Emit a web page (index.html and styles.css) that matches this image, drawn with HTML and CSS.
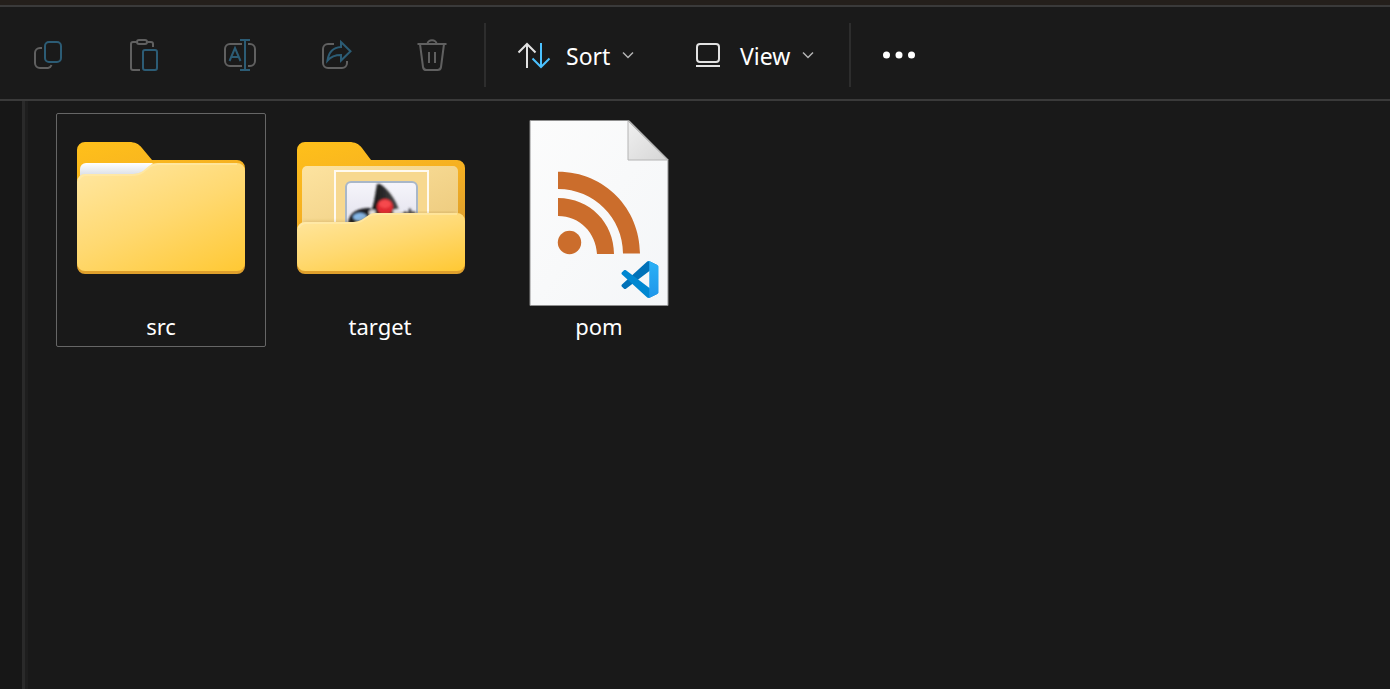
FILE: index.html
```html
<!DOCTYPE html>
<html lang="en">
<head>
<meta charset="utf-8">
<title>Files</title>
<link rel="stylesheet" href="styles.css">
</head>
<body>
<div class="window">
  <header class="toolbar">
    <button class="tool" type="button" aria-label="Copy" disabled>
      <svg class="icon" viewBox="0 0 48 48"><path class="dim" d="M18 17h-2a5 5 0 0 0-5 5v10a5 5 0 0 0 5 5h8a4.500 4.500 0 0 0 3.500-3"/><rect class="dim-blue" x="21" y="11" width="16" height="20" rx="4"/></svg>
    </button>
    <button class="tool" type="button" aria-label="Paste" disabled>
      <svg class="icon" viewBox="0 0 48 48"><path class="dim" d="M17 11h-4a2 2 0 0 0-2 2v24a2 2 0 0 0 2 2h7M27 11h4a2 2 0 0 1 2 2v3"/><rect class="dim" x="17" y="9" width="10" height="4" rx="2"/><rect class="dim-blue" x="23" y="19" width="14" height="20" rx="2"/></svg>
    </button>
    <button class="tool" type="button" aria-label="Rename" disabled>
      <svg class="icon" viewBox="0 0 48 48"><path class="dim" d="M26 13H14a5 5 0 0 0-5 5v12a5 5 0 0 0 5 5h12M32 13h2a5 5 0 0 1 5 5v12a5 5 0 0 1-5 5h-2"/><path class="dim-blue" d="M29 9v30M24 9h10M24 39h10M13.500 30L19 17l5.500 13M15 26h8"/></svg>
    </button>
    <button class="tool" type="button" aria-label="Share" disabled>
      <svg class="icon" viewBox="0 0 48 48"><path class="dim" d="M22 13h-6a5 5 0 0 0-5 5v14a5 5 0 0 0 5 5h14a5 5 0 0 0 5-5v-2"/><path class="dim-blue" d="M29 11l9.500 9.200L29 29.500V24c-6 0-10 1.500-13.500 5.500C16.500 22 21 16.500 29 16z"/></svg>
    </button>
    <button class="tool" type="button" aria-label="Delete" disabled>
      <svg class="icon" viewBox="0 0 48 48"><path class="dim" d="M9.500 13h29M19.500 13c0-5 9-5 9 0M12 13l3 23a3.500 3.500 0 0 0 3.500 3h11a3.500 3.500 0 0 0 3.500-3l3-23M21 21v11M27 21v11"/></svg>
    </button>
    <span class="separator"></span>
    <button class="menu sort" type="button">
      <svg class="icon" viewBox="0 0 48 48"><path class="light" d="M17 37V13M8.500 21.500L17 13l8.500 8.500"/><path class="blue" d="M31 12v24M22.500 27.500L31 36l8.500-8.500"/></svg>
      <span class="menu-text">Sort</span>
      <svg class="chevron" viewBox="0 0 16 16"><path class="soft" d="M3 5.500l5 5 5-5"/></svg>
    </button>
    <button class="menu view" type="button">
      <svg class="icon" viewBox="0 0 48 48"><rect class="light" x="13" y="13" width="22" height="18" rx="3"/><path class="light" d="M12 35h24"/></svg>
      <span class="menu-text">View</span>
      <svg class="chevron" viewBox="0 0 16 16"><path class="soft" d="M3 5.500l5 5 5-5"/></svg>
    </button>
    <span class="separator"></span>
    <button class="tool" type="button" aria-label="See more">
      <svg class="icon" viewBox="0 0 48 48" fill="#fff"><circle cx="11.500" cy="24" r="3.500"/><circle cx="24" cy="24" r="3.500"/><circle cx="36.500" cy="24" r="3.500"/></svg>
    </button>
  </header>
  <div class="body">
    <aside class="sidebar"></aside>
    <main class="files">
      <button class="file focused" type="button">
        <svg class="picture" viewBox="0 0 192 192">
          <defs>
            <linearGradient id="back" x1="0" y1="0" x2=".4" y2="1"><stop offset="0" stop-color="#ffc01a"/><stop offset=".5" stop-color="#f5b022"/><stop offset=".85" stop-color="#dfa02c"/></linearGradient>
            <linearGradient id="front" x1=".05" y1="0" x2=".8" y2="1.100"><stop offset="0" stop-color="#ffe7a2"/><stop offset=".5" stop-color="#ffd971"/><stop offset="1" stop-color="#ffc936"/></linearGradient>
            <linearGradient id="paper" x1="0" y1="0" x2="0" y2="1"><stop offset="0" stop-color="#fff"/><stop offset="1" stop-color="#d5dae2"/></linearGradient>
          </defs>
          <path fill="url(#back)" d="M12 33a8 8 0 0 1 8-8h44c6 0 10 2 13 6l10 12h85a8 8 0 0 1 8 8v98a8 8 0 0 1-8 8H20a8 8 0 0 1-8-8z"/>
          <path fill="url(#paper)" d="M15 60v-8a6 6 0 0 1 6-6h67L76 60z"/>
          <path fill="url(#front)" d="M12 65a8 8 0 0 1 8-8h46c6 0 9-1 12-3l6-5c3-2 5-3 9-3h79a8 8 0 0 1 8 8v92a8 8 0 0 1-8 8H20a8 8 0 0 1-8-8z"/>
          <path fill="none" stroke="#fff0bd" stroke-opacity=".4" stroke-width="2" d="M14 63a7 7 0 0 1 6-5h46c6 0 9-1 12-3l6-5c3-2 5-3 9-3h79"/>
        </svg>
        <span class="name">src</span>
      </button>
      <button class="file" type="button">
        <svg class="picture" viewBox="0 0 192 192">
          <defs>
            <linearGradient id="plate" x1="0" y1="0" x2="1" y2="1"><stop offset="0" stop-color="#fde3a0"/><stop offset="1" stop-color="#ebc87a"/></linearGradient>
            <linearGradient id="tile" x1="0" y1="0" x2="0" y2="1"><stop offset="0" stop-color="#f6f5fb"/><stop offset="1" stop-color="#dcdce8"/></linearGradient>
            <linearGradient id="hat" x1="0" y1="0" x2="1" y2="0"><stop offset="0" stop-color="#111"/><stop offset="1" stop-color="#4a4a4c"/></linearGradient>
            <filter id="soft-edge"><feGaussianBlur stdDeviation=".8"/></filter>
            <filter id="shade"><feGaussianBlur stdDeviation="2"/></filter>
          </defs>
          <path fill="url(#back)" d="M13 33a8 8 0 0 1 8-8h44c6 0 10 2 13 6l9 12h86a8 8 0 0 1 8 8v98a8 8 0 0 1-8 8H21a8 8 0 0 1-8-8z"/>
          <path fill="url(#plate)" d="M18 54a5 5 0 0 1 5-5h146a5 5 0 0 1 5 5v66H18z"/>
          <path fill="#f7d88f" stroke="#fffaf0" stroke-width="2" d="M51 120V54h93v66z"/>
          <path fill="url(#tile)" stroke="#a9b7c8" stroke-width="2" d="M62 120V70a5 5 0 0 1 5-5h61a5 5 0 0 1 5 5v50z"/>
          <g filter="url(#soft-edge)">
            <path fill="url(#hat)" d="M93 67h3c8 5 16 15 20 29l-3 2H86c4-10 5-20 7-31z"/>
            <path fill="#1f1f22" d="M64 108c0-10 6-17 22-17l5 8-14 9z"/>
            <path fill="#eeeef2" d="M85 94l6-1 1 6-6 3zM109 93l5-1 4 4v5h-8z"/>
            <path fill="#4a4a50" d="M117 98l4-4 3 2 1-5 2 1 1 3 3-1 1 6-12 2z"/>
            <ellipse cx="76" cy="100" rx="7" ry="4" fill="#86b7e8"/>
            <circle cx="101" cy="90" r="8" fill="#e02a33"/>
            <ellipse cx="101" cy="87" rx="6" ry="4" fill="#f64a4d"/>
          </g>
          <path filter="url(#shade)" fill="#8c6213" opacity=".3" d="M19 105h50c9 0 13-9 23-9h80v13H19z"/>
          <path fill="url(#front)" d="M13 113a8 8 0 0 1 8-8h46c6 0 9-1 12-3l6-4c3-2 5-2 9-2h79a8 8 0 0 1 8 8v42a8 8 0 0 1-8 8H21a8 8 0 0 1-8-8z"/>
          <path fill="none" stroke="#fff0bd" stroke-opacity=".4" stroke-width="2" d="M15 111a7 7 0 0 1 6-5h46c6 0 9-1 12-3l6-4c3-2 5-2 9-2h79"/>
        </svg>
        <span class="name">target</span>
      </button>
      <button class="file" type="button">
        <svg class="picture" viewBox="0 0 192 192">
          <defs>
            <linearGradient id="sheet" x1="0" y1="0" x2="1" y2="1"><stop offset="0" stop-color="#fcfcfc"/><stop offset="1" stop-color="#f4f6f8"/></linearGradient>
            <linearGradient id="fold" x1="0" y1="0" x2="1" y2="1"><stop offset="0" stop-color="#f0f0f0"/><stop offset="1" stop-color="#d6d6d6"/></linearGradient>
            <linearGradient id="strip" x1="0" y1="0" x2="0" y2="1"><stop offset="0" stop-color="#2bb1f6"/><stop offset="1" stop-color="#1f96ea"/></linearGradient>
          </defs>
          <path fill="url(#sheet)" stroke="#8f8f8f" d="M27 3.500h99l39 39v146H27z"/>
          <path fill="url(#fold)" stroke="#b4b4b4" d="M125 4v39h39.500z"/>
          <g fill="#cb6d2c">
            <path d="M55 54.700C102 54.700 137 92 137 136.400h-17C120 101 91 72 55 72zM55 81c32 0 56 25 56 56H94c-1-21-17-38-39-38z"/>
            <circle cx="66.500" cy="125.500" r="11.700"/>
          </g>
          <g transform="translate(118.500 144) scale(.37)">
            <path fill="#0071b8" d="M96.460 10.800L75.860.880C73.470-.270 70.620.210 68.750 2.080L1.300 63.580c-1.810 1.660-1.810 4.510 0 6.160l5.510 5.010c1.490 1.350 3.720 1.450 5.320.240L93.360 13.370C96.090 11.300 100 13.250 100 16.670z"/>
            <path fill="#0087d1" d="M96.460 89.200L75.860 99.120c-2.390 1.150-5.240.670-7.110-1.200L1.300 36.420c-1.810-1.660-1.810-4.510 0-6.160l5.510-5.010c1.490-1.350 3.720-1.450 5.320-.240L93.360 86.630C96.090 88.700 100 86.750 100 83.330z"/>
            <path fill="url(#strip)" d="M75.860 99.130c-2.390 1.140-5.240.660-7.110-1.210 2.310 2.300 6.250.670 6.250-2.590V4.670C75 1.410 71.060-.220 68.750 2.080 70.620.210 73.470-.270 75.860.870l20.600 9.910C98.620 11.820 100 14.010 100 16.410v67.180c0 2.400-1.380 4.590-3.540 5.630z"/>
          </g>
        </svg>
        <span class="name">pom</span>
      </button>
    </main>
  </div>
</div>
</body>
</html>
```
FILE: styles.css
```css
* {
  box-sizing: border-box;
}

body {
  margin: 0;
  background: #191919;
  color: #fff;
  font-family: "Noto Sans", "Open Sans", sans-serif;
}

.window {
  display: flex;
  flex-direction: column;
  min-height: 100vh;
  border-top: 5px solid #241f1b;
}

.toolbar {
  display: flex;
  align-items: stretch;
  padding: 16px 0 12px;
  border-top: 2px solid #3a3a3a;
  border-bottom: 2px solid #3a3a3a;
  background: #1a1a1a;
}

button {
  margin: 0;
  padding: 0;
  border: 0;
  background: none;
  color: inherit;
  font: inherit;
}

.tool {
  display: flex;
  align-items: center;
  justify-content: center;
  width: 96px;
  height: 64px;
}

.toolbar .tool:nth-child(5) {
  margin-right: 4px;
}

.icon {
  width: 48px;
  height: 48px;
  flex: none;
}

.separator {
  width: 2px;
  background: #2d2d2d;
}

.menu {
  display: flex;
  align-items: center;
  gap: 8px;
  height: 64px;
  padding-left: 24px;
  font-size: 23px;
  line-height: 32px;
}

.sort {
  width: 174px;
}

.view {
  width: 189px;
}

.menu-text {
  padding-top: 2px;
}

.chevron {
  width: 16px;
  height: 16px;
  margin-left: 2px;
}

.dim,
.dim-blue,
.light,
.blue {
  fill: none;
  stroke-width: 2px;
}

.dim {
  stroke: #606060;
}

.dim-blue {
  stroke: #2c5c75;
}

.light {
  stroke: #e2e2e2;
}

.blue {
  stroke: #4cc2ff;
}

.soft {
  fill: none;
  stroke: #b4b4b4;
  stroke-width: 1.5px;
}

.body {
  display: flex;
  flex: 1;
}

.sidebar {
  width: 25px;
  border-right: 3px solid #2a2a2a;
  background: #171717;
}

.files {
  display: flex;
  flex: 1;
  flex-wrap: wrap;
  align-content: flex-start;
  gap: 9px;
  padding: 12px 28px;
  border-left: 3px solid #1e1e1e;
}

.file {
  display: flex;
  flex-direction: column;
  align-items: center;
  gap: 2px;
  width: 210px;
  padding: 3px 0 5px;
  border: 1px solid transparent;
  border-radius: 2px;
  font-size: 22px;
  line-height: 30px;
}

.focused {
  border-color: #666;
}

.picture {
  width: 192px;
  height: 192px;
}
```
